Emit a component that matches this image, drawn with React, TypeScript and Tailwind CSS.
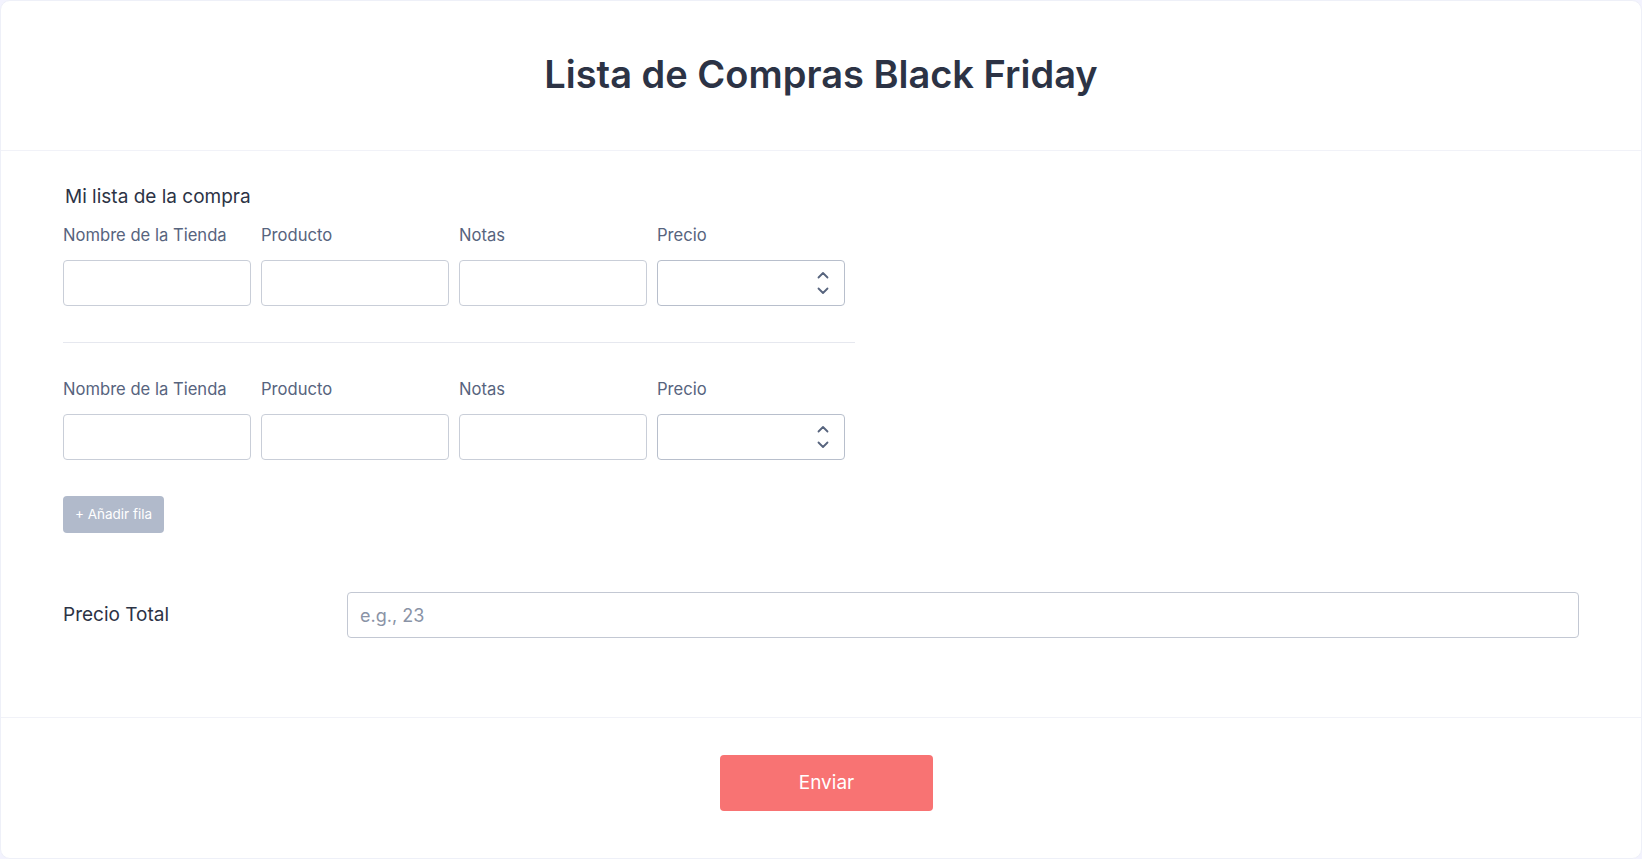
import React from 'react';

const columns = ['Nombre de la Tienda', 'Producto', 'Notas', 'Precio'];

function Spinner() {
  return (
    <svg
      className="pointer-events-none absolute right-[15px] top-1/2 -translate-y-1/2"
      width="14"
      height="26"
      viewBox="0 0 14 26"
      fill="none"
      stroke="#57647e"
      strokeWidth="1.8"
      strokeLinecap="round"
      strokeLinejoin="round"
    >
      <path d="M2.5 7.5 7 3 11.5 7.5" />
      <path d="M2.5 18.5 7 23 11.5 18.5" />
    </svg>
  );
}

function ItemRow() {
  return (
    <div className="grid w-[792px] grid-cols-4">
      {columns.map((col) => (
        <div key={col} className="pr-[10px]">
          <label className="block text-[16.6px] leading-6 text-[#57647e]">{col}</label>
          <div className="relative mt-[13px]">
            <input
              type="text"
              className={
                col === 'Precio'
                  ? 'block h-[46px] w-full rounded-[4px] border border-[#b8bfcc] bg-white px-3 text-base text-[#2c3345] outline-none'
                  : 'block h-[46px] w-full rounded-[4px] border border-[#c9ced8] bg-white px-3 text-base text-[#2c3345] outline-none'
              }
            />
            {col === 'Precio' && <Spinner />}
          </div>
        </div>
      ))}
    </div>
  );
}

export default function App() {
  return (
    <div className="min-h-screen bg-[#f3f3fe] font-['Inter',sans-serif]">
      <div className="h-[859px] w-[1642px] rounded-[10px] border border-[#eef0f8] bg-white">
        <div className="flex h-[150px] items-center justify-center border-b border-[#f1f2f8] pb-[3px]">
          <h1 className="text-[38px] font-semibold leading-[46px] text-[#2c3345]">
            Lista de Compras Black Friday
          </h1>
        </div>

        <div className="border-b border-[#f1f2f8] pb-[79px] pl-[62px] pr-[62px] pt-[32px]">
          <h2 className="pl-[2px] text-[19px] leading-7 text-[#2c3345]">Mi lista de la compra</h2>

          <div className="mt-[12px]">
            <ItemRow />
          </div>

          <div className="mt-[36px] h-px w-[792px] bg-[#e6e8ef]" />

          <div className="mt-[34px]">
            <ItemRow />
          </div>

          <button
            type="button"
            className="mt-[36px] h-[37px] w-[101px] rounded-[4px] bg-[#b1bacb] text-[13.5px] text-white"
          >
            + Añadir fila
          </button>

          <div className="mt-[59px] flex items-center">
            <label className="w-[284px] shrink-0 text-[19px] text-[#2c3345]">Precio Total</label>
            <input
              type="text"
              placeholder="e.g., 23"
              className="h-[46px] w-[1234px] rounded-[4px] border border-[#c3c8d3] bg-white px-3 text-lg text-[#2c3345] outline-none placeholder:text-[#8a93a6]"
            />
          </div>
        </div>

        <div className="flex justify-center pl-[11px] pt-[37px]">
          <button
            type="button"
            className="h-[56px] w-[213px] rounded-[4px] bg-[#f87373] text-[19px] text-white"
          >
            Enviar
          </button>
        </div>
      </div>
    </div>
  );
}
